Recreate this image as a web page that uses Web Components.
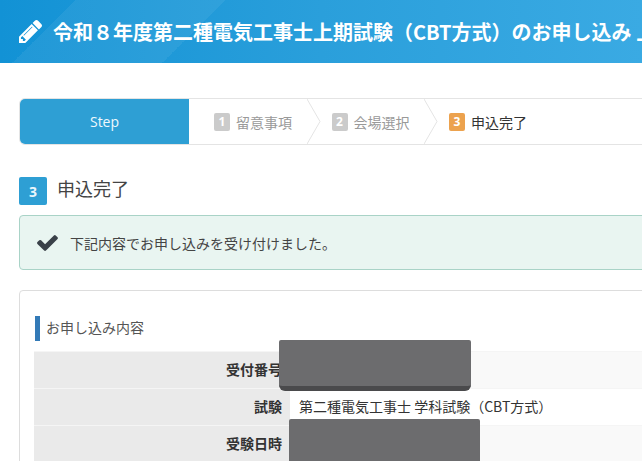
<!DOCTYPE html>
<html lang="ja">
<head>
<meta charset="utf-8">
<title>申込完了</title>
<style>
    html, body { margin: 0; height: 100%; overflow: hidden; background: #fff; }
    body { font-family: "Noto Sans CJK JP", "Noto Sans", sans-serif; color: #333; }
    .page { display: block; position: relative; width: 642px; height: 461px; overflow: hidden; }
</style>
</head>
<body>
<div class="page">
    <page-header>令和８年度第二種電気工事士上期試験（CBT方式）のお申し込み 上期</page-header>
    <page-main>
        <step-bar>
            <step-item num="1">留意事項</step-item>
            <step-item num="2">会場選択</step-item>
            <step-item num="3" current>申込完了</step-item>
        </step-bar>
        <section-title num="3">申込完了</section-title>
        <alert-box>下記内容でお申し込みを受け付けました。</alert-box>
        <info-card heading="お申し込み内容">
            <info-row label="受付番号"></info-row>
            <info-row label="試験" plain>第二種電気工事士 学科試験（CBT方式）</info-row>
            <info-row label="受験日時"></info-row>
        </info-card>
    </page-main>
    <redact-box style="left:279px;top:340px;width:192px;height:51px" shadowed></redact-box>
    <redact-box style="left:289px;top:419px;width:191px;height:50px"></redact-box>
</div>

<script>
class PageHeader extends HTMLElement {
    constructor() {
        super();
        this.attachShadow({ mode: 'open' });
        this.shadowRoot.innerHTML = `
            <style>
                :host {
                    display: flex;
                    align-items: center;
                    gap: 11px;
                    height: 63px;
                    padding-left: 19px;
                    white-space: nowrap;
                    overflow: hidden;
                    color: #fff;
                    font-size: 20px;
                    font-weight: 700;
                    background:
                        linear-gradient(135deg, transparent 12.5%, rgba(255,255,255,.06) 12.5%, rgba(255,255,255,.06) 37.5%, transparent 37.5%) 0 0 / 300px 300px no-repeat,
                        linear-gradient(90deg, #1292d5 0%, #2a9fdb 50%, #3aaae3 100%);
                }
                svg { width: 23px; height: 23px; flex: none; }
            </style>
            <svg viewBox="0 149 1515 1515"><path fill="#fff" d="M363 1536l91-91-235-235-91 91v107h128v128h107zm523-928q0-22-22-22-10 0-17 7l-542 542q-7 7-7 17 0 22 22 22 10 0 17-7l542-542q7-7 7-17zm-54-192l416 416-832 832h-416v-416zm683 96q0 53-37 90l-166 166-416-416 166-165q36-38 90-38 53 0 91 38l235 234q37 39 37 91z"/></svg>
            <slot></slot>
        `;
    }
}

class PageMain extends HTMLElement {
    constructor() {
        super();
        this.attachShadow({ mode: 'open' });
        this.shadowRoot.innerHTML = `
            <style>
                :host {
                    display: flex;
                    flex-direction: column;
                    width: 760px;
                    padding: 35px 0 0 19px;
                }
            </style>
            <slot></slot>
        `;
    }
}

class StepBar extends HTMLElement {
    constructor() {
        super();
        this.attachShadow({ mode: 'open' });
        this.shadowRoot.innerHTML = `
            <style>
                :host {
                    display: flex;
                    box-sizing: border-box;
                    height: 47px;
                    border: 1px solid #e4e4e4;
                    border-radius: 6px 0 0 6px;
                }
                .lead {
                    flex: none;
                    width: 169px;
                    display: flex;
                    align-items: center;
                    justify-content: center;
                    background: #2e9fd4;
                    color: #eef8fd;
                    font: 14px "Open Sans", sans-serif;
                    border-radius: 5px 0 0 5px;
                }
            </style>
            <div class="lead">Step</div>
            <slot></slot>
        `;
    }
}

class StepItem extends HTMLElement {
    constructor() {
        super();
        this.attachShadow({ mode: 'open' });
        const current = this.hasAttribute('current');
        this.shadowRoot.innerHTML = `
            <style>
                :host {
                    display: flex;
                    align-items: center;
                    gap: 6px;
                    flex: none;
                    width: 117.5px;
                    padding-left: 25px;
                    box-sizing: border-box;
                    font-size: 14px;
                    color: ${current ? '#333' : '#999'};
                    position: relative;
                }
                .num {
                    width: 16px;
                    height: 18px;
                    border-radius: 2px;
                    display: flex;
                    align-items: center;
                    justify-content: center;
                    background: ${current ? '#eca24e' : '#cbcbcb'};
                    color: #fff;
                    font: 700 12px "Open Sans", sans-serif;
                }
                svg { position: absolute; right: -14px; top: 0; width: 14px; height: 45px; }
            </style>
            <span class="num">${this.getAttribute('num')}</span>
            <slot></slot>
            ${current ? '' : '<svg viewBox="0 0 14 45"><path fill="none" stroke="#e4e4e4" d="M0 0l13 22.5L0 45"/></svg>'}
        `;
    }
}

class SectionTitle extends HTMLElement {
    constructor() {
        super();
        this.attachShadow({ mode: 'open' });
        this.shadowRoot.innerHTML = `
            <style>
                :host {
                    display: flex;
                    gap: 10px;
                    margin-top: 32px;
                    height: 28px;
                    font-size: 18px;
                    line-height: 22px;
                    color: #444;
                }
                .num {
                    width: 28px;
                    height: 28px;
                    border-radius: 2px;
                    background: #2e9fd4;
                    color: #eaf6fc;
                    display: flex;
                    align-items: center;
                    justify-content: center;
                    font: 700 14px "Open Sans", sans-serif;
                }
            </style>
            <span class="num">${this.getAttribute('num')}</span>
            <slot></slot>
        `;
    }
}

class AlertBox extends HTMLElement {
    constructor() {
        super();
        this.attachShadow({ mode: 'open' });
        this.shadowRoot.innerHTML = `
            <style>
                :host {
                    display: flex;
                    align-items: center;
                    gap: 12px;
                    box-sizing: border-box;
                    height: 55px;
                    margin-top: 10px;
                    padding-left: 17px;
                    background: #e9f5f1;
                    border: 1px solid #a9d3c7;
                    border-radius: 4px;
                    font-size: 14px;
                    color: #444;
                }
                svg { width: 21px; height: 16px; flex: none; }
            </style>
            <svg viewBox="121 334 1550 1188"><path fill="#3a4149" d="M1671 566q0 40-28 68l-724 724-136 136q-28 28-68 28t-68-28l-136-136-362-362q-28-28-28-68t28-68l136-136q28-28 68-28t68 28l294 295 656-657q28-28 68-28t68 28l136 136q28 28 28 68z"/></svg>
            <slot></slot>
        `;
    }
}

class InfoCard extends HTMLElement {
    constructor() {
        super();
        this.attachShadow({ mode: 'open' });
        this.shadowRoot.innerHTML = `
            <style>
                :host {
                    display: block;
                    box-sizing: border-box;
                    margin-top: 20px;
                    padding: 25px 0 0 14px;
                    border: 1px solid #ddd;
                    border-radius: 4px;
                    height: 300px;
                }
                h2 {
                    margin: 0 0 10px 1px;
                    height: 25px;
                    border-left: 5px solid #337ab7;
                    padding-left: 6px;
                    font-size: 14px;
                    font-weight: 400;
                    line-height: 23px;
                    color: #555;
                }
            </style>
            <h2>${this.getAttribute('heading')}</h2>
            <slot></slot>
        `;
    }
}

class InfoRow extends HTMLElement {
    constructor() {
        super();
        this.attachShadow({ mode: 'open' });
        const plain = this.hasAttribute('plain');
        this.shadowRoot.innerHTML = `
            <style>
                :host {
                    display: grid;
                    grid-template-columns: 256px 1fr;
                    height: 37px;
                    box-sizing: border-box;
                    border-top: 1px solid #f5f5f5;
                    font-size: 14px;
                }
                .label {
                    background: #eaeaea;
                    display: flex;
                    align-items: center;
                    justify-content: flex-end;
                    padding: 0 8px 2px 0;
                    font-weight: 700;
                    color: #333;
                }
                .value {
                    background: ${plain ? '#fff' : '#f9f9f9'};
                    display: flex;
                    align-items: center;
                    padding: 0 0 2px 9px;
                    color: #333;
                }
            </style>
            <div class="label">${this.getAttribute('label')}</div>
            <div class="value"><slot></slot></div>
        `;
    }
}

class RedactBox extends HTMLElement {
    constructor() {
        super();
        this.attachShadow({ mode: 'open' });
        this.shadowRoot.innerHTML = `
            <style>
                :host {
                    display: block;
                    position: absolute;
                    box-sizing: border-box;
                    background: #6c6c6e;
                    border-radius: 2px;
                }
                :host([shadowed]) {
                    border-bottom: 5px solid #4a4a4c;
                    border-radius: 2px 2px 6px 6px;
                }
            </style>
        `;
    }
}

customElements.define('page-header', PageHeader);
customElements.define('page-main', PageMain);
customElements.define('step-bar', StepBar);
customElements.define('step-item', StepItem);
customElements.define('section-title', SectionTitle);
customElements.define('alert-box', AlertBox);
customElements.define('info-card', InfoCard);
customElements.define('info-row', InfoRow);
customElements.define('redact-box', RedactBox);
</script>
</body>
</html>
